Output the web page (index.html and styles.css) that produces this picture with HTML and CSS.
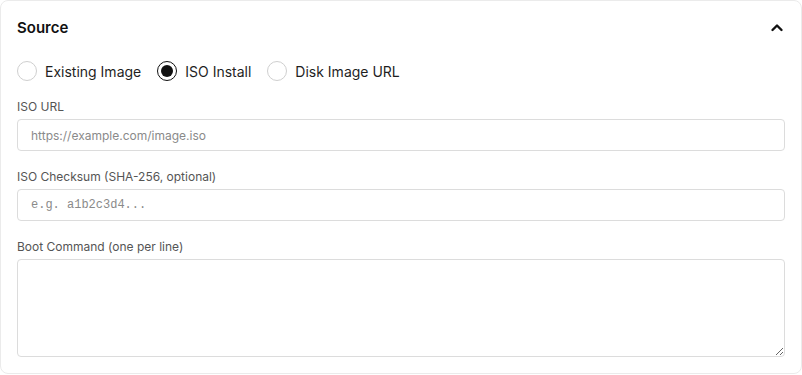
FILE: index.html
```html
<!DOCTYPE html>
<html>
<head>
<meta charset="utf-8">
<link rel="stylesheet" href="styles.css">
</head>
<body>
<section class="card">
  <div class="card-header">
    <h2 class="title">Source</h2>
    <svg class="chevron" width="16" height="16" viewBox="0 0 16 16"><path d="M3.5 10 L8 5.5 L12.5 10" fill="none" stroke="#111" stroke-width="2.4" stroke-linecap="round" stroke-linejoin="round"/></svg>
  </div>
  <div class="radios">
    <label class="radio"><span class="dot"></span>Existing Image</label>
    <label class="radio checked"><span class="dot"></span>ISO Install</label>
    <label class="radio"><span class="dot"></span>Disk Image URL</label>
  </div>
  <div class="field">
    <div class="label">ISO URL</div>
    <input class="input" type="text" placeholder="https://example.com/image.iso">
  </div>
  <div class="field">
    <div class="label">ISO Checksum (SHA-256, optional)</div>
    <input class="input mono" type="text" placeholder="e.g. a1b2c3d4...">
  </div>
  <div class="field">
    <div class="label">Boot Command (one per line)</div>
    <textarea class="textarea"></textarea>
  </div>
</section>
</body>
</html>
```
FILE: styles.css
```css
* { box-sizing: border-box; }
html, body { margin: 0; padding: 0; background: #fff; }
body { font-family: Inter, "Noto Sans", sans-serif; color: #1a1a1a; }
.card {
  width: 802px;
  height: 374px;
  border: 1px solid #ebebeb;
  border-radius: 8px;
  padding: 16px;
  display: flex;
  flex-direction: column;
}
.card-header {
  display: flex;
  align-items: center;
  justify-content: space-between;
  height: 22px;
}
.title { margin: 0; font-size: 15px; font-weight: 600; line-height: 22px; color: #111; }
.chevron { display: block; }
.radios {
  display: flex;
  gap: 16px;
  margin-top: 22px;
  height: 20px;
  align-items: center;
}
.radio {
  display: flex;
  align-items: center;
  gap: 8px;
  font-size: 14px;
  color: #1f1f1f;
}
.dot {
  width: 20px;
  height: 20px;
  border-radius: 50%;
  border: 1px solid #cfcfcf;
  background: #fff;
  display: flex;
  align-items: center;
  justify-content: center;
}
.radio.checked .dot { border: 1.5px solid #111; }
.radio.checked .dot::after {
  content: "";
  width: 12px;
  height: 12px;
  border-radius: 50%;
  background: #111;
}
.field { display: flex; flex-direction: column; margin-top: 16px; }
.label { font-size: 12px; line-height: 18px; color: #555; padding-top: 1px; margin-bottom: 3px; }
.input {
  height: 32px;
  border: 1px solid #dcdcdc;
  border-radius: 4px;
  padding: 0 13px;
  font-family: Inter, "Noto Sans", sans-serif;
  font-size: 12px;
  color: #222;
  outline: none;
}
.input::placeholder { color: #8a8a8a; }
.input.mono { font-family: "Liberation Mono", monospace; font-size: 12px; }
.textarea {
  height: 98px;
  border: 1px solid #dcdcdc;
  border-radius: 4px;
  resize: vertical;
  outline: none;
}
```
